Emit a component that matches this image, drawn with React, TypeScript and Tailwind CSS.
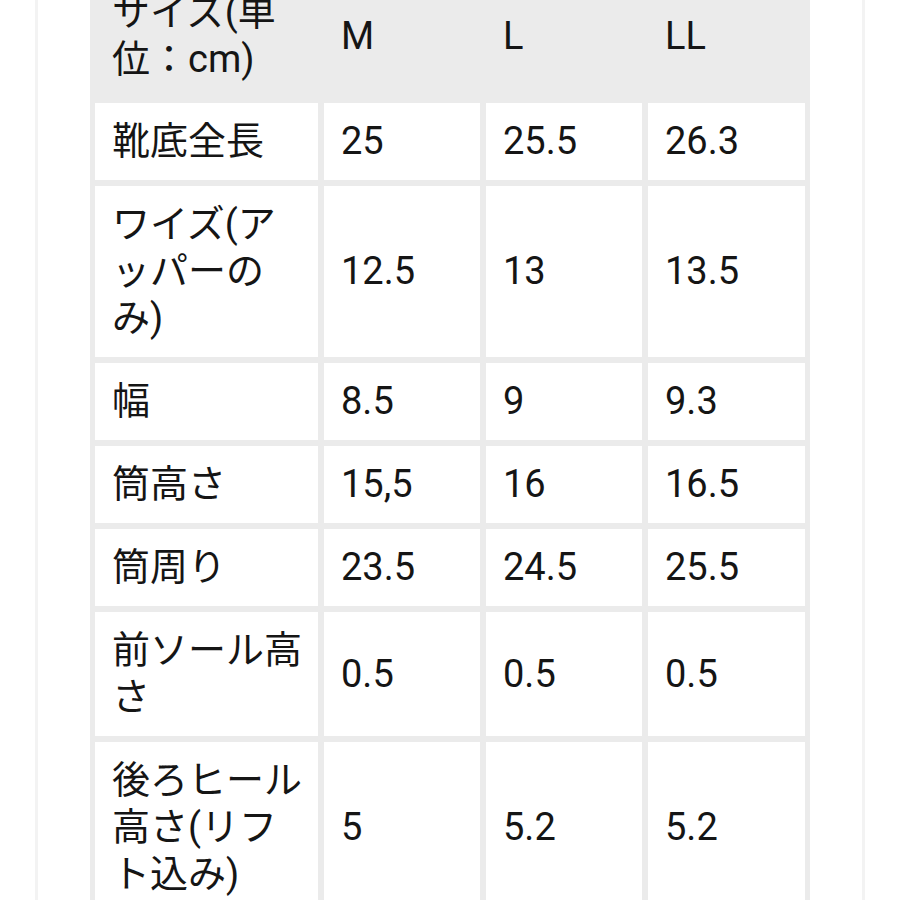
import React from "react";

const header = ["サイズ(単位：cm)", "M", "L", "LL"];

const rows: string[][] = [
  ["靴底全長", "25", "25.5", "26.3"],
  ["ワイズ(アッパーのみ)", "12.5", "13", "13.5"],
  ["幅", "8.5", "9", "9.3"],
  ["筒高さ", "15,5", "16", "16.5"],
  ["筒周り", "23.5", "24.5", "25.5"],
  ["前ソール高さ", "0.5", "0.5", "0.5"],
  ["後ろヒール高さ(リフト込み)", "5", "5.2", "5.2"],
];

export default function App() {
  return (
    <div className="h-[900px] w-[900px] overflow-hidden bg-white">
      <div
        className="mx-[35px] flex h-[900px] flex-col border-x-[3px] border-[#f3f3f3] pl-[52px]"
        style={{ fontFamily: 'Roboto, "Noto Sans CJK JP", sans-serif' }}
      >
        {/* Size table */}
        <div className="-mt-[32px] grid w-[720px] shrink-0 grid-cols-[223px_156px_156px_157px] gap-[6px] bg-[#ebebeb] p-[5px] text-[38px] leading-[47px] text-[#151515]">
          {header.map((h, i) => (
            <div key={i} className="flex items-center pl-[17px] pr-[8px] pt-[16px] pb-[14px]">
              {h}
            </div>
          ))}
          {rows.map((row, r) =>
            row.map((c, i) => (
              <div
                key={`${r}-${i}`}
                className="flex items-center bg-white pl-[17px] pr-[8px] py-[15px]"
              >
                {c}
              </div>
            ))
          )}
        </div>
      </div>
    </div>
  );
}
